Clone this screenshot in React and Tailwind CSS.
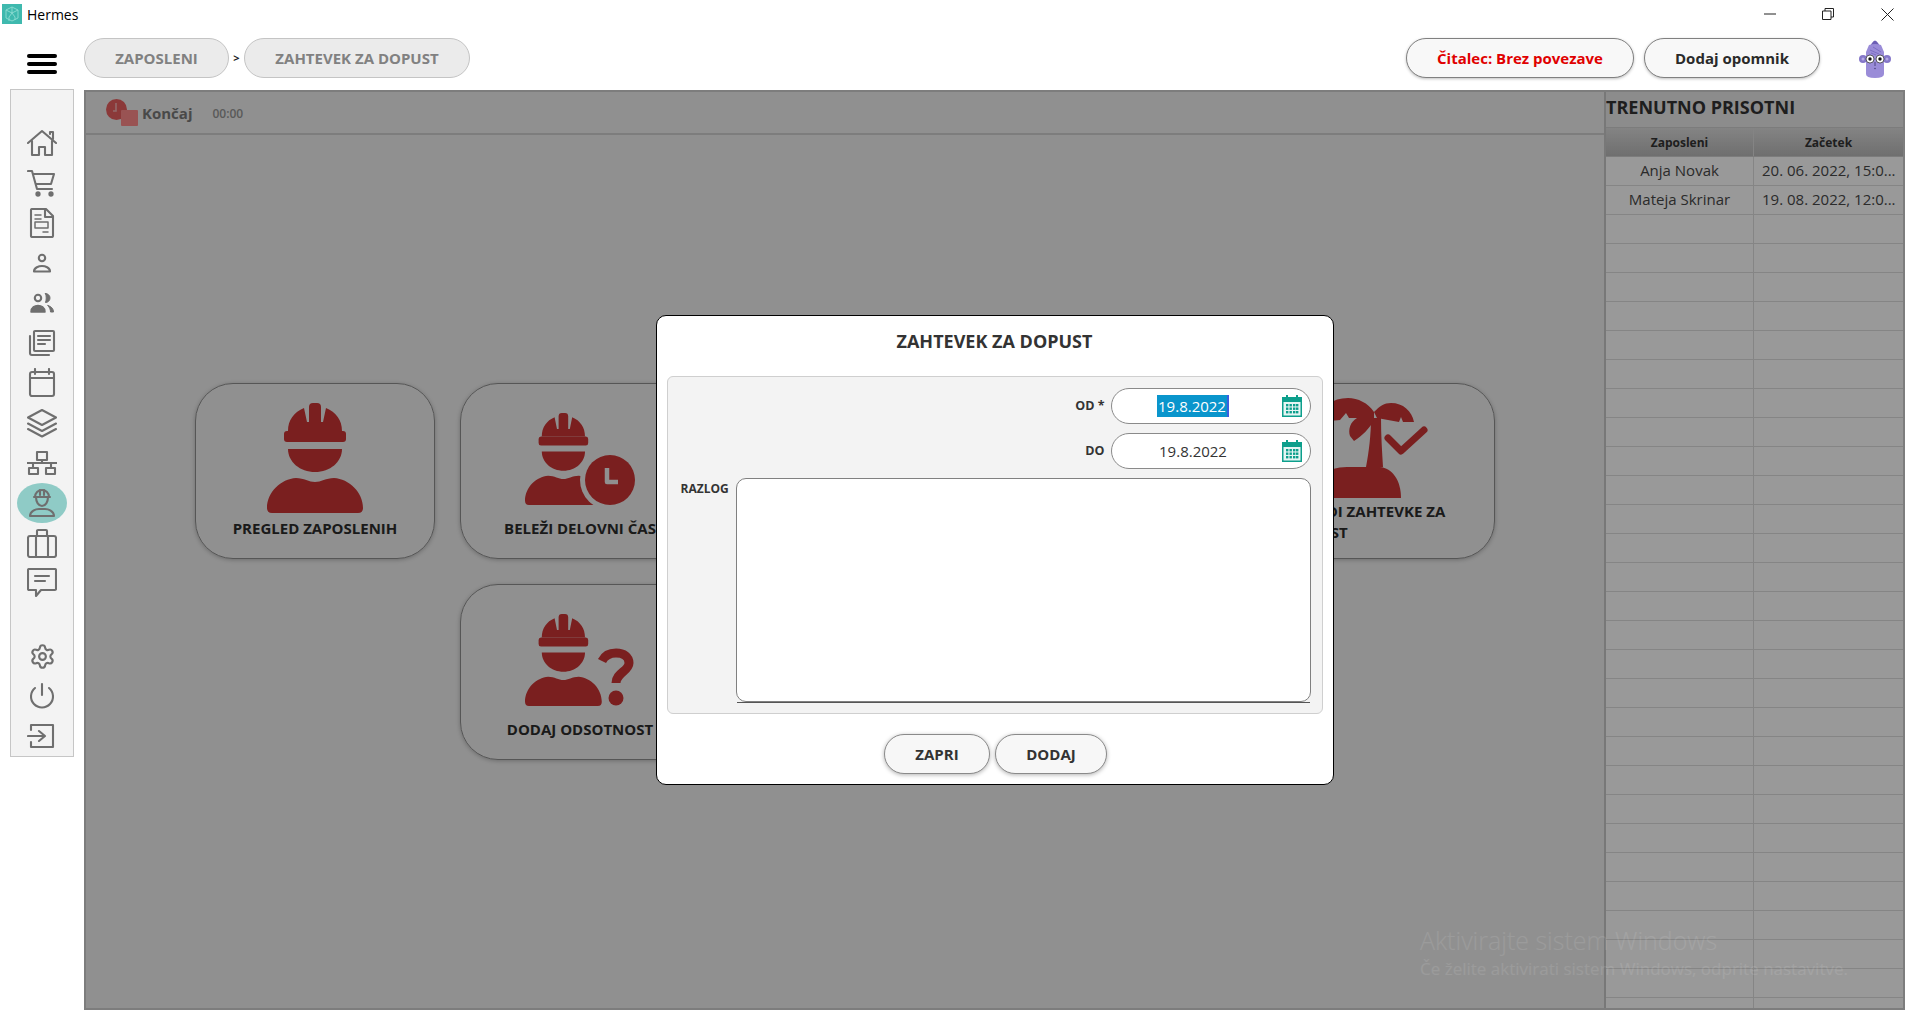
import React from "react";
import { Settings } from "lucide-react";

const F = { fontFamily: '"Open Sans","Noto Sans",sans-serif' };

function I({ children, size = 30 }) {
  return (
    <svg width={size} height={size} viewBox="0 0 30 30" fill="none" stroke="#6f6f6f" strokeWidth="2.1" strokeLinejoin="round" strokeLinecap="round">
      {children}
    </svg>
  );
}

const topIcons = [
  <I><path d="M1 15 15 3l14 12" /><path d="M23 6V4h3v7" /><path d="M5 13v14h7v-8h6v8h7V13" /></I>,
  <I><path d="M1 3h4l5 18h15" /><path d="M6 6h21l-3 10H9" /><circle cx="11" cy="26" r="1.6" fill="#6f6f6f" /><circle cx="24" cy="26" r="1.6" fill="#6f6f6f" /></I>,
  <I><path d="M5 1h14l7 7v20a1 1 0 0 1-1 1H5a1 1 0 0 1-1-1V2a1 1 0 0 1 1-1z" /><path d="M18 1v8h8" /><path d="M8 7h6M8 11h6M16 24h5" strokeWidth="1.5" /><rect x="8" y="14" width="13" height="6" strokeWidth="1.5" /></I>,
  <I><circle cx="15" cy="10" r="3.2" /><path d="M7 23.5c0-4 5-5.5 8-5.5s8 1.5 8 5.5z" /></I>,
  <I><circle cx="11" cy="10" r="3.2" /><path d="M18.5 5.5a4.5 4.5 0 0 1 0 9c1-3 1-6 0-9z" fill="#6f6f6f" strokeWidth="1" /><path d="M4 24c0-5 4-6.5 7-6.5s7 1.5 7 6.5z" fill="#6f6f6f" strokeWidth="1.5" /><path d="M21 17.5c3 1 5.5 3 5.5 6.5h-3c0-2.5-1-4.5-2.5-6.5z" fill="#6f6f6f" strokeWidth="1" /></I>,
  <I><path d="M3 8v17a2 2 0 0 0 2 2h17" /><rect x="7" y="3" width="20" height="20" rx="1" /><path d="M11 8h12M11 12h12M11 16h7" /></I>,
  <I><rect x="3" y="4" width="24" height="24" rx="2" /><path d="M3 10h24M8 1v5M22 1v5" /></I>,
  <I><path d="M15 2 29 9.5 15 17 1 9.5z" /><path d="M1 15.5 15 23l14-7.5" /><path d="M1 21l14 7.5L29 21" /></I>,
  <I><rect x="10" y="4" width="10" height="8" /><path d="M15 12v3M0 15h30M6 15v5M24 15v5" /><rect x="2" y="20" width="9" height="6" /><rect x="19" y="20" width="9" height="6" /></I>,
  <I><path d="M8 9a7 7 0 0 1 14 0" /><path d="M7 9h16M13 2v5M17 2v5" /><path d="M9 9c0 5 2.5 9 6 9s6-4 6-9" /><path d="M3 28c0-5 6-7 9-7h6c3 0 9 2 9 7z" /></I>,
  <I><rect x="1" y="8" width="28" height="21" rx="2" /><path d="M10 8V3a1 1 0 0 1 1-1h8a1 1 0 0 1 1 1v5M9 8v21M21 8v21" /></I>,
  <I><path d="M2 1h26a1 1 0 0 1 1 1v19a1 1 0 0 1-1 1H14l-5 6v-6H2a1 1 0 0 1-1-1V2a1 1 0 0 1 1-1z" /><path d="M8 8h14M8 13h10" /></I>,
];

const bottomIcons = [
  <Settings size={27} strokeWidth={1.9} color="#6f6f6f" />,
  <I><path d="M15 3v11" /><path d="M8 7a11 11 0 1 0 14 0" /></I>,
  <I><path d="M4 9V4h22v22H4v-5" /><path d="M1 15h16M12 10l6 5-6 5" /></I>,
];

function Sidebar() {
  return (
    <div className="w-[64px] h-[668px] ml-[10px] -mt-px bg-[#f3f3f3] border border-[#c6c6c6] pt-[33px] flex flex-col items-center">
      {topIcons.map((ic, i) => (
        <div key={i} className={"h-[40px] w-full flex items-center justify-center " + (i === 9 ? "relative" : "")}>
          {i === 9 && <div className="absolute left-[6px] top-0 w-[50px] h-[40px] rounded-[50%] bg-[#8fcbc6]" />}
          <div className="relative flex">{ic}</div>
        </div>
      ))}
      <div className="h-[33px]" />
      {bottomIcons.map((ic, i) => (
        <div key={i} className="h-[40px] w-full flex items-center justify-center">{ic}</div>
      ))}
    </div>
  );
}

const RED = "#cc3434";

function Helmet() {
  return (
    <g fill={RED}>
      <rect x="17" y="28" width="62" height="11" rx="3" />
      <path d="M21 28C21 17 27 9 37 5l3 14h2V4q0-4 4-4h4q4 0 4 4v15h2l3-14c10 4 16 12 16 23z" />
      <path d="M21 46h54c0 13-12 23-27 23S21 59 21 46z" />
    </g>
  );
}
const bodyPath = "M0 105C0 89 14 76 29 75c8 0 13 4 19 4s11-4 19-4c15 1 29 14 29 30q0 5-5 5H5q-5 0-5-5z";

function Worker() {
  return (
    <svg width="96" height="110" viewBox="0 0 96 110" className="block">
      <Helmet />
      <path d={bodyPath} fill={RED} />
    </svg>
  );
}

function SmallWorker({ children }) {
  return (
    <svg width="120" height="92" viewBox="0 0 120 92" className="block ml-[10px]">
      <g transform="scale(0.8 0.836)">
        <Helmet />
        <path d={bodyPath} fill={RED} />
      </g>
      {children}
    </svg>
  );
}

function ClockBadge() {
  return (
    <SmallWorker>
      <circle cx="85" cy="67" r="30" fill="#f0f0f0" />
      <circle cx="85" cy="67" r="25" fill={RED} />
      <path d="M82 55v14h11" fill="none" stroke="#f0f0f0" strokeWidth="4.5" strokeLinejoin="round" />
    </SmallWorker>
  );
}

function Question() {
  return (
    <SmallWorker>
      <path d="M77 47c3-6 8-8 14-8 8 0 13 4 13 10 0 8-13 10-13 20" fill="none" stroke={RED} strokeWidth="9" />
      <circle cx="91" cy="84" r="7.5" fill={RED} />
    </SmallWorker>
  );
}

function Palm() {
  return (
    <svg width="130" height="100" viewBox="0 0 130 100" className="block ml-[46px]">
      <g fill={RED}>
        <path d="M7 100C9 80 25 69 45 69h33c12 1 21 13 21 31z" />
        <path d="M64 69c3-15 5-33 5-49h10c0 17 1 33 2 49z" />
        <path d="M72 14C66 5 56 0 46 0 30 0 20 8 17 24l21-2 6-7 3 5h8c-7 4-9 12-7 18l4 5c8-5 16-13 20-21z" />
        <path d="M72 14c6-6 10-9 17-9 12 0 21 8 23 19h-11l-2-5-2 5-22-4z" />
      </g>
      <path d="M86 40l13 13 23-21" fill="none" stroke={RED} strokeWidth="7" strokeLinecap="round" strokeLinejoin="round" />
    </svg>
  );
}

function Card({ pt, mt, icon, label, className = "" }) {
  return (
    <div
      className={"h-[176px] rounded-[38px] border border-[#8f8f8f] shadow-[0_1px_4px_rgba(0,0,0,0.25)] flex flex-col items-center " + className}
      style={{ paddingTop: pt }}
    >
      {icon}
      <div className="text-[15px] leading-[21px] font-bold text-[#2c2c2c] text-center" style={{ marginTop: mt }}>
        {label}
      </div>
    </div>
  );
}

function PalmCard() {
  return (
    <div className="col-start-5 h-[176px] rounded-[38px] border border-[#8f8f8f] shadow-[0_1px_4px_rgba(0,0,0,0.25)] flex flex-col items-start pt-[14px]">
      <Palm />
      <div className="mt-[3px] text-[15px] leading-[21px] font-bold text-[#2c2c2c]">
        <div className="pl-[41px] whitespace-nowrap">UREDI ZAHTEVKE ZA</div>
        <div className="pl-[31px]">DOPUST</div>
      </div>
    </div>
  );
}

function CalendarIcon() {
  return (
    <svg width="20" height="22" viewBox="0 0 20 22" className="block shrink-0">
      <rect x="0" y="2" width="20" height="20" fill="#0d9f8c" />
      <rect x="4" y="0" width="2" height="4" fill="#0d9f8c" />
      <rect x="14" y="0" width="2" height="4" fill="#0d9f8c" />
      <rect x="1.5" y="7" width="17" height="13.5" fill="#e6f5f3" />
      <g fill="#0d9f8c">
        {[4, 7.5, 11, 14].map((x) =>
          [9, 12.5, 16].map((y) => <rect key={x + "-" + y} x={x} y={y} width="2.4" height="2.4" />)
        )}
      </g>
    </svg>
  );
}

function DateField({ selected }) {
  return (
    <div className="w-[200px] h-[36px] rounded-full bg-white border border-[#8a8a8a] flex items-center pr-[8px] relative">
      <div className="flex-1 flex justify-center pr-[7px]">
        <span
          className={
            "text-[15px] leading-[22px] px-px " +
            (selected ? "bg-[#0a95cc] text-white border-r-2 border-[#3b5fe0]" : "text-[#333]")
          }
        >
          19.8.2022
        </span>
      </div>
      <CalendarIcon />
    </div>
  );
}

function Dialog() {
  return (
    <div className="w-[678px] h-[470px] bg-white border border-black rounded-[10px] flex flex-col items-stretch">
      <div className="h-[60px] flex items-center justify-center pb-[9px] text-[18px] font-bold text-[#333]">ZAHTEVEK ZA DOPUST</div>
      <div className="mx-[10px] h-[338px] rounded-[6px] bg-[#f3f3f3] border border-[#cfcfcf] pt-[11px] pr-[11px] flex flex-col items-end">
        <div className="flex items-center gap-[6px]">
          <span className="text-[12.5px] font-bold text-[#333]">OD *</span>
          <DateField selected />
        </div>
        <div className="flex items-center gap-[6px] mt-[9px]">
          <span className="text-[12.5px] font-bold text-[#333]">DO</span>
          <DateField />
        </div>
        <div className="flex mt-[9px] gap-[7px] self-stretch pl-[13px]">
          <span className="text-[12px] font-bold text-[#333] w-[48px] pt-[2px]">RAZLOG</span>
          <div className="flex-1 flex flex-col">
            <div className="h-[224px] bg-white border border-[#808080] rounded-[10px]" />
            <div className="h-px mx-px bg-[#555]" />
          </div>
        </div>
      </div>
      <div className="flex justify-center gap-[5px] mt-[20px] pl-[2px]">
        <button className="w-[106px] h-[40px] rounded-[20px] bg-[#f7f7f7] border border-[#8a8a8a] shadow-[0_1px_4px_rgba(0,0,0,0.3)] text-[15px] font-bold text-[#333]">ZAPRI</button>
        <button className="w-[112px] h-[40px] rounded-[20px] bg-[#f7f7f7] border border-[#8a8a8a] shadow-[0_1px_4px_rgba(0,0,0,0.3)] text-[15px] font-bold text-[#333]">DODAJ</button>
      </div>
    </div>
  );
}

const rows = [
  ["Anja Novak", "20. 06. 2022, 15:0..."],
  ["Mateja Skrinar", "19. 08. 2022, 12:0..."],
  ...Array.from({ length: 28 }, () => ["", ""]),
];

function Panel() {
  return (
    <div className="w-[1821px] h-[920px] relative">
      <div className="h-full flex border-2 border-[#d0d0d0] bg-[#f0f0f0]">
        <div className="flex-1 flex flex-col">
          <div className="h-[43px] shrink-0 border-b-2 border-[#d0d0d0] flex items-center pl-[20px]">
            <svg width="33" height="28" viewBox="0 0 33 28" className="block">
              <circle cx="10.5" cy="10.5" r="10.5" fill="#e86060" />
              <path d="M10 4v8H7" stroke="#f4b0b0" strokeWidth="1.6" fill="none" />
              <rect x="15" y="11" width="17" height="16" rx="1" fill="#ff8a8a" />
            </svg>
            <span className="ml-[3px] pt-[1px] text-[15px] font-bold text-[#7b7b7b]">Končaj</span>
            <span className="ml-[20px] pt-[2px] text-[12px] font-semibold text-[#969696]">00:00</span>
          </div>
          <div className="flex-1 pl-[109px] pt-[248px] grid grid-cols-[repeat(5,240px)] gap-x-[25px] gap-y-[25px] content-start">
            <Card pt={19} mt={5} icon={<Worker />} label="PREGLED ZAPOSLENIH" />
            <Card pt={29} mt={13} icon={<ClockBadge />} label="BELEŽI DELOVNI ČAS" />
            <PalmCard />
            <Card pt={29} mt={13} icon={<Question />} label="DODAJ ODSOTNOST" className="col-start-2" />
          </div>
        </div>
        <div className="w-[299px] shrink-0 bg-[#e9e9e9] flex flex-col overflow-hidden border-l-2 border-[#c8c8c8]">
          <div className="h-[35px] shrink-0 flex items-center pb-[4px] text-[18px] font-bold text-[#333]">TRENUTNO PRISOTNI</div>
          <div className="flex-1 bg-white overflow-hidden">
            <div className="grid grid-cols-[148px_1fr] h-[30px] bg-gradient-to-b from-[#dcdcdc] to-[#b9b9b9] border-y border-[#cfcfcf]">
              <div className="flex items-center justify-center pt-[1px] text-[12px] font-bold text-[#333] border-r border-[#dcdcdc]">Zaposleni</div>
              <div className="flex items-center justify-center pt-[1px] text-[12px] font-bold text-[#333]">Začetek</div>
            </div>
            {rows.map((r, i) => (
              <div key={i} className="grid grid-cols-[148px_1fr] h-[29px] border-b border-[#dedede]">
                <div className="flex items-center justify-center pb-[1px] text-[15px] text-[#484848] border-r border-[#dedede]">{r[0]}</div>
                <div className="pl-[8px] leading-[27px] whitespace-nowrap text-[15px] text-[#484848]">{r[1]}</div>
              </div>
            ))}
          </div>
        </div>
      </div>
      <div className="absolute inset-0 bg-black/40 flex items-center justify-center">
        <Dialog />
      </div>
    </div>
  );
}

function Crumb({ w, children }) {
  return (
    <div className="h-[40px] pt-[1px] rounded-full bg-[#ebebeb] border border-[#c4c4c4] flex items-center justify-center text-[15px] font-bold text-[#818181]" style={{ width: w }}>
      {children}
    </div>
  );
}

function ActionBtn({ w, color, children }) {
  return (
    <div className="h-[40px] pt-[1px] rounded-full bg-[#f8f8f8] border border-[#808080] shadow-[0_1px_3px_rgba(0,0,0,0.25)] flex items-center justify-center text-[15px] font-bold" style={{ width: w, color }}>
      {children}
    </div>
  );
}

function Logo() {
  return (
    <svg width="20" height="20" viewBox="0 0 20 20" className="block">
      <rect width="20" height="20" fill="#3fb9ae" />
      <path d="M10 3l6 3v8l-6 3-6-3V6z M10 3v6 M4 6l6 3 6-3 M10 9l-3 4v4 M10 9l3 4v3" fill="none" stroke="#8fdcd3" strokeWidth="0.9" />
    </svg>
  );
}

function Owl() {
  return (
    <svg width="32" height="40" viewBox="0 0 32 40" className="block">
      <circle cx="4" cy="20" r="4" fill="#8577c9" />
      <circle cx="28" cy="20" r="4" fill="#8577c9" />
      <circle cx="4" cy="20" r="1.5" fill="#b4a9e6" />
      <circle cx="28" cy="20" r="1.5" fill="#b4a9e6" />
      <path d="M13 4q3-5 6 0l2 3H11z" fill="#6d5fb5" />
      <path d="M10 6q6-2 12 0l3 7v22q0 4-9 4t-9-4V13z" fill="#9a8cd8" />
      <path d="M11 11l9 4M14 8l8 5M12 14l5 2" stroke="#7566bd" strokeWidth="0.8" fill="none" />
      <circle cx="11" cy="20" r="4" fill="#fff" stroke="#222" strokeWidth="0.7" />
      <circle cx="21" cy="20" r="4" fill="#fff" stroke="#222" strokeWidth="0.7" />
      <circle cx="11" cy="20" r="1.7" fill="#111" />
      <circle cx="21" cy="20" r="1.7" fill="#111" />
      <path d="M16 23v4" stroke="#3b3470" strokeWidth="0.8" />
      <circle cx="16" cy="29.5" r="0.7" fill="#3b3470" />
    </svg>
  );
}

export default function App() {
  return (
    <div className="w-[1920px] h-[1027px] bg-white relative overflow-hidden flex flex-col" style={F}>
      <div className="h-[30px] shrink-0 flex items-center relative -top-[1px]">
        <div className="ml-[2px]"><Logo /></div>
        <span className="ml-[5px] text-[14px] text-black">Hermes</span>
        <div className="ml-auto flex items-center mr-[26px] gap-[46px]">
          <svg width="12" height="12" viewBox="0 0 12 12" className="block"><path d="M0 6h12" stroke="#222" strokeWidth="1" /></svg>
          <svg width="12" height="12" viewBox="0 0 12 12" className="block"><path d="M.5 3h8.5v8.5H.5zM3 3V.5h8.5V9H9" fill="none" stroke="#222" strokeWidth="1" /></svg>
          <svg width="13" height="13" viewBox="0 0 13 13" className="block ml-[1px]"><path d="M.5.5l12 12M12.5.5l-12 12" stroke="#222" strokeWidth="1" /></svg>
        </div>
      </div>
      <div className="h-[60px] shrink-0 flex items-start pt-[8px]">
        <div className="ml-[27px] mt-[16px] w-[30px] flex flex-col gap-[4px]">
          <div className="h-[4px] rounded-full bg-black" />
          <div className="h-[4px] rounded-full bg-black" />
          <div className="h-[4px] rounded-full bg-black" />
        </div>
        <div className="ml-[27px] flex items-center">
          <Crumb w={145}>ZAPOSLENI</Crumb>
          <span className="w-[15px] text-center text-[11px] font-bold text-[#222] pt-[1px]">&gt;</span>
          <Crumb w={226}>ZAHTEVEK ZA DOPUST</Crumb>
        </div>
        <div className="ml-auto flex items-start mr-[29px]">
          <ActionBtn w={228} color="#e00000">Čitalec: Brez povezave</ActionBtn>
          <div className="w-[10px]" />
          <ActionBtn w={176} color="#2a2a2a">Dodaj opomnik</ActionBtn>
          <div className="ml-[39px] mt-[1px]"><Owl /></div>
        </div>
      </div>
      <div className="flex items-start">
        <Sidebar />
        <div className="ml-[10px]"><Panel /></div>
      </div>
      <div className="absolute left-[1420px] top-[923px] pointer-events-none text-white/10 font-light">
        <div className="text-[25px] leading-[34px]">Aktivirajte sistem Windows</div>
        <div className="text-[17px] leading-[24px] font-normal">Če želite aktivirati sistem Windows, odprite nastavitve.</div>
      </div>
    </div>
  );
}
